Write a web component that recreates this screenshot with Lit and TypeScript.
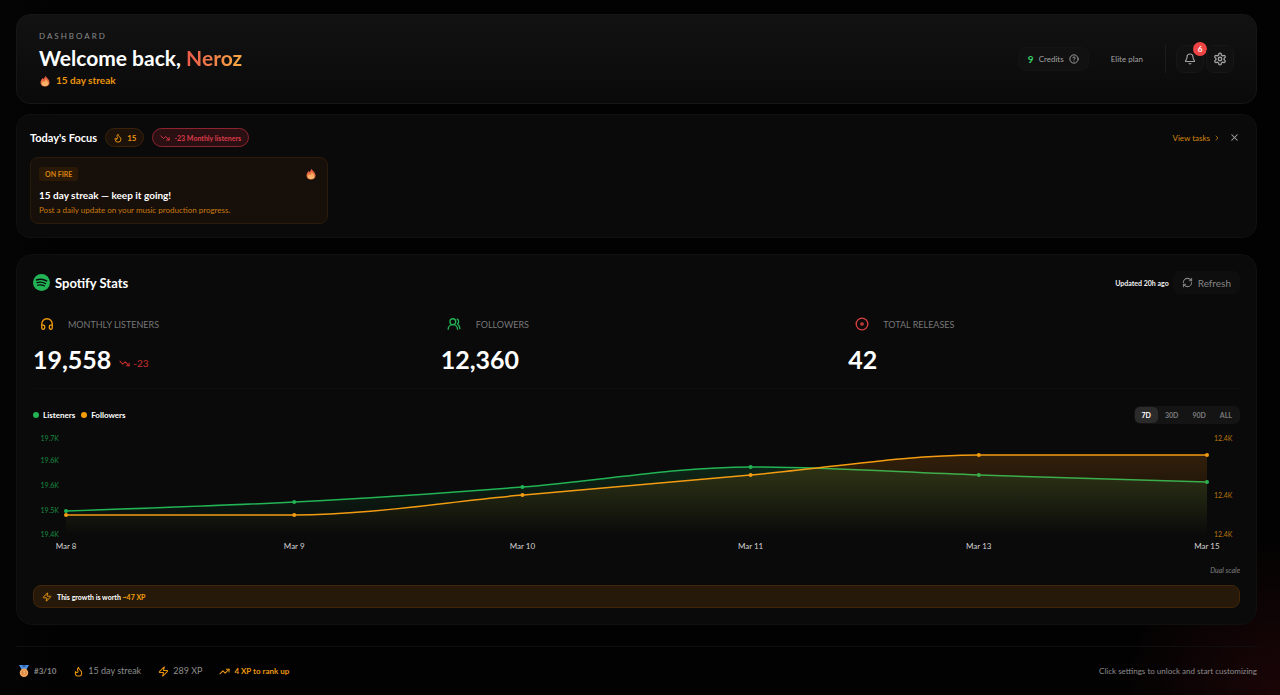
import { LitElement, html, svg, css } from "lit";
import { customElement, property, state } from "lit/decorators.js";
import { classMap } from "lit/directives/class-map.js";

const ICONS: Record<string, unknown> = {
  flame: svg`<path d="M8.5 14.5A2.5 2.5 0 0 0 11 12c0-1.38-.5-2-1-3-1.072-2.143-.224-4.054 2-6 .5 2.5 2 4.9 4 6.5 2 1.6 3 3.5 3 5.5a7 7 0 1 1-14 0c0-1.153.433-2.294 1-3a2.5 2.5 0 0 0 2.5 2.5z"/>`,
  down: svg`<path d="M16 17h6v-6"/><path d="m22 17-8.5-8.5-5 5L2 7"/>`,
  up: svg`<path d="M16 7h6v6"/><path d="m22 7-8.5 8.5-5-5L2 17"/>`,
  help: svg`<circle cx="12" cy="12" r="10"/><path d="M9.09 9a3 3 0 0 1 5.83 1c0 2-3 3-3 3"/><path d="M12 17h.01"/>`,
  bell: svg`<path d="M10.268 21a2 2 0 0 0 3.464 0"/><path d="M3.262 15.326A1 1 0 0 0 4 17h16a1 1 0 0 0 .74-1.673C19.41 13.956 18 12.499 18 8A6 6 0 0 0 6 8c0 4.499-1.411 5.956-2.738 7.326"/>`,
  gear: svg`<path d="M12.22 2h-.44a2 2 0 0 0-2 2v.18a2 2 0 0 1-1 1.73l-.43.25a2 2 0 0 1-2 0l-.15-.08a2 2 0 0 0-2.73.73l-.22.38a2 2 0 0 0 .73 2.73l.15.1a2 2 0 0 1 1 1.72v.51a2 2 0 0 1-1 1.74l-.15.09a2 2 0 0 0-.73 2.73l.22.38a2 2 0 0 0 2.73.73l.15-.08a2 2 0 0 1 2 0l.43.25a2 2 0 0 1 1 1.73V20a2 2 0 0 0 2 2h.44a2 2 0 0 0 2-2v-.18a2 2 0 0 1 1-1.73l.43-.25a2 2 0 0 1 2 0l.15.08a2 2 0 0 0 2.73-.73l.22-.39a2 2 0 0 0-.73-2.73l-.15-.08a2 2 0 0 1-1-1.74v-.5a2 2 0 0 1 1-1.74l.15-.09a2 2 0 0 0 .73-2.73l-.22-.38a2 2 0 0 0-2.73-.73l-.15.08a2 2 0 0 1-2 0l-.43-.25a2 2 0 0 1-1-1.73V4a2 2 0 0 0-2-2z"/><circle cx="12" cy="12" r="3"/>`,
  chevron: svg`<path d="m9 18 6-6-6-6"/>`,
  close: svg`<path d="M18 6 6 18"/><path d="m6 6 12 12"/>`,
  headphones: svg`<path d="M3 14h3a2 2 0 0 1 2 2v3a2 2 0 0 1-2 2H5a2 2 0 0 1-2-2v-7a9 9 0 0 1 18 0v7a2 2 0 0 1-2 2h-1a2 2 0 0 1-2-2v-3a2 2 0 0 1 2-2h3"/>`,
  users: svg`<path d="M18 21a8 8 0 0 0-16 0"/><circle cx="10" cy="8" r="5"/><path d="M22 20c0-3.37-2-6.5-4-8a5 5 0 0 0-.45-8.3"/>`,
  disc: svg`<circle cx="12" cy="12" r="10"/><circle cx="12" cy="12" r="2"/>`,
  refresh: svg`<path d="M3 12a9 9 0 0 1 9-9 9.75 9.75 0 0 1 6.74 2.74L21 8"/><path d="M21 3v5h-5"/><path d="M21 12a9 9 0 0 1-9 9 9.75 9.75 0 0 1-6.74-2.74L3 16"/><path d="M8 16H3v5"/>`,
  zap: svg`<path d="M4 14a1 1 0 0 1-.78-1.63l9.9-10.2a.5.5 0 0 1 .86.46l-1.92 6.02A1 1 0 0 0 13 10h7a1 1 0 0 1 .78 1.63l-9.9 10.2a.5.5 0 0 1-.86-.46l1.92-6.02A1 1 0 0 0 11 14z"/>`,
};

@customElement("ui-icon")
export class UiIcon extends LitElement {
  @property() name = "";
  static styles = css`
    :host { display: inline-flex; width: 12px; height: 12px; flex: none; }
    .glyph {
      width: 100%; height: 100%; fill: none; stroke: currentColor;
      stroke-width: 2.25; stroke-linecap: round; stroke-linejoin: round;
    }
  `;
  render() {
    return html`<svg class="glyph" viewBox="0 0 24 24" aria-hidden="true">${ICONS[this.name]}</svg>`;
  }
}

@customElement("fire-emoji")
export class FireEmoji extends LitElement {
  static styles = css`
    :host { display: inline-flex; width: 12px; height: 12px; flex: none; }
    .art { width: 100%; height: 100%; }
  `;
  render() {
    return html`<svg class="art" viewBox="0 0 24 24" aria-hidden="true">
      <defs>
        <linearGradient id="f" x1="0" y1="0" x2="0" y2="1">
          <stop offset="0" stop-color="#d9503c"/><stop offset="1" stop-color="#f58a4a"/>
        </linearGradient>
        <linearGradient id="i" x1="0" y1="0" x2="0" y2="1">
          <stop offset="0" stop-color="#f79a4c"/><stop offset="1" stop-color="#fcbd78"/>
        </linearGradient>
      </defs>
      <path fill="url(#f)" d="M12.500 1.500c1.500 3 8.500 6.500 8.500 13.500 0 5-4 8-9 8s-9-3-9-8c0-4 2.500-6.500 4-9 .8.6 1.300 1.300 1.600 2C10 6.500 12 4.500 12.500 1.500z"/>
      <path fill="url(#i)" d="M13.500 7.500c.8 3 5 4.500 5 9 0 3.500-3 5.500-6.500 5.500s-6.300-2-6.300-5c0-2 1-3.500 2-5 .9.5 1.400 1.200 1.700 2 2-1.300 3.800-3.500 4.100-6.500z"/>
    </svg>`;
  }
}

interface Pt { x: number; y: number; }

/* Monotone cubic interpolation through evenly read samples. */
function monotone(p: Pt[]): string {
  const n = p.length;
  const s = p.slice(1).map((q, i) => (q.y - p[i].y) / (q.x - p[i].x));
  const t = p.map((_, i) => {
    if (i === 0 || i === n - 1) return 0;
    const a = s[i - 1];
    const b = s[i];
    return a * b <= 0 ? 0 : Math.sign(a) * Math.min(Math.abs(a), Math.abs(b), Math.abs(a + b) / 4) * 2;
  });
  t[0] = (3 * s[0] - t[1]) / 2;
  t[n - 1] = (3 * s[n - 2] - t[n - 2]) / 2;
  let d = `M${p[0].x},${p[0].y}`;
  for (let i = 0; i < n - 1; i++) {
    const h = (p[i + 1].x - p[i].x) / 3;
    d += `C${p[i].x + h},${p[i].y + t[i] * h} ${p[i + 1].x - h},${p[i + 1].y - t[i + 1] * h} ${p[i + 1].x},${p[i + 1].y}`;
  }
  return d;
}

@customElement("growth-chart")
export class GrowthChart extends LitElement {
  private days = ["Mar 8", "Mar 9", "Mar 10", "Mar 11", "Mar 13", "Mar 15"];
  private listeners = [24, 33, 48, 68, 60, 53];
  private followers = [20, 20, 40, 60, 80, 80];

  static styles = css`
    :host { display: grid; grid-template-columns: 26px 1fr 26px; column-gap: 7px; }
    .axis { display: grid; font-size: 7px; line-height: 12px; }
    .left { grid-template-rows: 22px 25px 25px 24px 12px; color: #178a42; text-align: right; }
    .right { grid-template-rows: 57px 39px 12px; color: #b8740c; }
    .plot { padding-top: 3px; min-width: 0; }
    .canvas { display: block; width: 100%; height: 100px; overflow: visible; }
    .line { fill: none; stroke-width: 1.5; vector-effect: non-scaling-stroke; }
    .dot { stroke-width: 4; stroke-linecap: round; vector-effect: non-scaling-stroke; }
    .green { stroke: #22b455; }
    .amber { stroke: #f39c12; }
    .days { display: flex; justify-content: space-between; margin: 5px -20px 0; font-size: 8px; line-height: 12px; color: #d4d4d4; }
    .day { width: 40px; text-align: center; }
  `;

  private series(values: number[], color: string, fill: string) {
    const pts = values.map((v, i) => ({ x: i * 200, y: 100 - v }));
    const d = monotone(pts);
    return svg`
      <path d="${d}L1000,100L0,100Z" fill=${fill}></path>
      <path class="line ${color}" d=${d}></path>
      ${pts.map((p) => svg`<path class="dot ${color}" d="M${p.x},${p.y}h0.01"></path>`)}`;
  }

  render() {
    return html`
      <div class="axis left">${["19.7K", "19.6K", "19.6K", "19.5K", "19.4K"].map((l) => html`<span>${l}</span>`)}</div>
      <div class="plot">
        <svg class="canvas" viewBox="0 0 1000 100" preserveAspectRatio="none" role="img" aria-label="Listeners and followers">
          <defs>
            <linearGradient id="g" x1="0" y1="0" x2="0" y2="1">
              <stop offset="0" stop-color="#22c55e" stop-opacity="0.15"/><stop offset="1" stop-color="#22c55e" stop-opacity="0"/>
            </linearGradient>
            <linearGradient id="a" x1="0" y1="0" x2="0" y2="1">
              <stop offset="0" stop-color="#f5870b" stop-opacity="0.17"/><stop offset="1" stop-color="#f5870b" stop-opacity="0"/>
            </linearGradient>
          </defs>
          ${this.series(this.listeners, "green", "url(#g)")}
          ${this.series(this.followers, "amber", "url(#a)")}
        </svg>
        <div class="days">${this.days.map((d) => html`<span class="day">${d}</span>`)}</div>
      </div>
      <div class="axis right">${["12.4K", "12.4K", "12.4K"].map((l) => html`<span>${l}</span>`)}</div>
    `;
  }
}

@customElement("app-root")
export class AppRoot extends LitElement {
  @state() private range = "7D";

  static styles = css`
    :host {
      display: block; box-sizing: border-box; min-height: 100vh; padding: 14px 23px 0 16px;
      font-family: Lato, "Open Sans", sans-serif; color: #fff;
      background:
        radial-gradient(circle at 100% 100%, rgba(150, 20, 30, 0.17), transparent 160px),
        linear-gradient(90deg, #050404, #020202 60px);
    }
    *, *::before { box-sizing: border-box; }
    h1, h2, h3, p { margin: 0; }
    button { font: inherit; color: inherit; background: none; border: 0; padding: 0; cursor: pointer; }
    a { text-decoration: none; }
    .card { border: 1px solid #101010; border-radius: 14px; background: #0a0a0a; }
    .row { display: flex; align-items: center; }
    .between { justify-content: space-between; }

    .hero { padding: 15px 22px; border-color: #161616; background: linear-gradient(180deg, #121212, #0a0a0a); }
    .eyebrow { font-size: 8px; line-height: 13px; letter-spacing: 2px; color: #8a8a8a; }
    .title { font-size: 21px; line-height: 30px; font-weight: 700; }
    .name { background: linear-gradient(90deg, #ea5a4c, #f7a944); -webkit-background-clip: text; background-clip: text; color: transparent; }
    .streak { gap: 5px; font-size: 10px; line-height: 15px; font-weight: 700; color: #eb960f; }
    .tools { gap: 5px; }
    .credits { gap: 5px; height: 24px; padding: 0 9px; border: 1px solid #141414; border-radius: 8px; background: #111; font-size: 8px; color: #a3a3a3; }
    .count { font-size: 10px; font-weight: 700; color: #34d067; }
    .credits ui-icon { width: 10px; height: 10px; }
    .plan { padding: 0 17px; font-size: 8px; color: #a3a3a3; }
    .rule { width: 1px; height: 28px; background: #1c1c1c; margin-right: 5px; }
    .square { position: relative; display: flex; align-items: center; justify-content: center; width: 28px; height: 28px; border: 1px solid #171717; border-radius: 8px; background: #111; color: #a3a3a3; }
    .square + .square { margin-left: -3px; }
    .gear { width: 14px; height: 14px; }
    .badge { position: absolute; top: -4px; right: -4px; width: 14px; height: 14px; border-radius: 7px; background: #ef4444; color: #fff; font-size: 8px; line-height: 14px; font-weight: 700; }

    .focus { margin-top: 10px; padding: 13px; }
    .heading { font-size: 11px; line-height: 19px; font-weight: 700; }
    .pills { gap: 8px; }
    .pill { display: flex; align-items: center; gap: 4px; height: 19px; padding: 0 7px; border: 1px solid #3a220b; border-radius: 10px; background: #1c1209; color: #eb960f; font-size: 8px; font-weight: 700; }
    .pill ui-icon { width: 10px; height: 10px; }
    .loss { border-color: #8c2430; background: #2b1013; color: #d93a48; font-size: 7px; }
    .actions { gap: 8px; color: #a3a3a3; }
    .tasks { display: flex; align-items: center; gap: 3px; font-size: 8px; color: #d4860c; }
    .tasks ui-icon { width: 8px; height: 8px; }
    .close { display: flex; margin-right: 3px; }
    .close ui-icon { width: 11px; height: 11px; }
    .tips { display: grid; grid-template-columns: repeat(4, 1fr); gap: 7px; margin-top: 10px; }
    .tip { padding: 9px 8px 6px; border: 1px solid #2c1b0a; border-radius: 8px; background: #170f09; }
    .tag { padding: 0 6px; border-radius: 3px; background: #2a1906; font-size: 7px; line-height: 14px; font-weight: 700; color: #d9820c; }
    .tip-title { margin-top: 6px; font-size: 10px; line-height: 16px; font-weight: 700; }
    .tip-text { font-size: 8px; line-height: 14px; color: #c97a0e; }
    .tip-head { height: 14px; padding-right: 2px; }

    .stats { margin-top: 16px; padding: 16px; border-radius: 16px; }
    .brand { gap: 5px; font-size: 13px; line-height: 22px; }
    .logo { width: 17px; height: 17px; flex: none; }
    .updated { font-size: 7px; font-weight: 700; color: #f0f0f0; }
    .refresh-row { gap: 4px; }
    .refresh { display: flex; align-items: center; gap: 5px; height: 23px; padding: 0 8px; border: 1px solid #0f0f0f; border-radius: 7px; background: #0e0e0e; color: #858585; font-size: 10px; }
    .refresh ui-icon { width: 11px; height: 11px; }
    .metrics { display: grid; grid-template-columns: repeat(3, 1fr); gap: 16px; margin-top: 16px; padding-bottom: 13px; border-bottom: 1px solid #0e0e0e; }
    .metric-head { gap: 8px; height: 28px; font-size: 9px; color: #777; }
    .metric-icon { display: flex; align-items: center; justify-content: center; width: 27px; height: 28px; }
    .metric-icon ui-icon { width: 14px; height: 14px; }
    .amber { color: #f59e0b; }
    .green { color: #22b455; }
    .red { color: #dc4040; }
    .value { display: flex; align-items: center; gap: 8px; margin-top: 5px; font-size: 25px; line-height: 32px; font-weight: 700; }
    .delta { display: flex; align-items: center; gap: 3px; padding-top: 8px; font-size: 10px; line-height: 12px; font-weight: 400; color: #cc2d2d; }
    .delta ui-icon { width: 11px; height: 11px; }

    .legend-row { margin-top: 17px; }
    .legend { gap: 6px; font-size: 8px; font-weight: 700; }
    .key { display: flex; align-items: center; gap: 4px; }
    .bullet { width: 6px; height: 6px; border-radius: 3px; background: currentColor; }
    .ranges { display: flex; height: 18px; padding: 1px; border-radius: 6px; background: #141414; }
    .range { padding: 0 7px; border-radius: 5px; font-size: 7px; font-weight: 700; color: #7c7c7c; }
    .on { background: #2b2b2b; color: #fff; }
    growth-chart { margin-top: 8px; }
    .note { margin-top: 12px; font-size: 7px; line-height: 12px; font-style: italic; color: #808080; text-align: right; }
    .xp { gap: 5px; height: 23px; margin-top: 9px; padding: 0 8px; border: 1px solid #42250a; border-radius: 8px; background: #261909; font-size: 7px; font-weight: 700; }
    .xp ui-icon { width: 10px; height: 10px; color: #f59e0b; }

    .foot { margin-top: 21px; padding: 15px 0; border-top: 1px solid #0f0f0f; font-size: 9px; line-height: 18px; color: #8c8c8c; }
    .facts { gap: 17px; padding-left: 2px; }
    .fact { display: flex; align-items: center; gap: 4px; }
    .fact ui-icon { width: 11px; height: 11px; color: #eb960f; }
    .rank { font-size: 8px; font-weight: 700; color: #858585; }
    .medal { width: 12px; height: 12px; }
    .next { font-size: 8px; font-weight: 700; color: #eb960f; }
    .hint { font-size: 8px; }
  `;

  private metric(icon: string, tone: string, label: string, value: string, delta = "") {
    return html`<div>
      <div class="row metric-head"><span class="metric-icon ${tone}"><ui-icon name=${icon}></ui-icon></span><span>${label}</span></div>
      <div class="value"><span>${value}</span>${delta ? html`<span class="delta"><ui-icon name="down"></ui-icon>${delta}</span>` : ""}</div>
    </div>`;
  }

  render() {
    return html`
      <header class="card hero row between">
        <div>
          <p class="eyebrow">DASHBOARD</p>
          <h1 class="title">Welcome back, <span class="name">Neroz</span></h1>
          <p class="row streak"><fire-emoji></fire-emoji>15 day streak</p>
        </div>
        <div class="row tools">
          <button class="row credits"><span class="count">9</span><span>Credits</span><ui-icon name="help"></ui-icon></button>
          <span class="plan">Elite plan</span>
          <span class="rule"></span>
          <button class="square" aria-label="Notifications"><ui-icon name="bell"></ui-icon><span class="badge">6</span></button>
          <button class="square" aria-label="Settings"><ui-icon class="gear" name="gear"></ui-icon></button>
        </div>
      </header>

      <section class="card focus">
        <div class="row between">
          <div class="row pills">
            <h2 class="heading">Today's Focus</h2>
            <span class="pill"><ui-icon name="flame"></ui-icon>15</span>
            <span class="pill loss"><ui-icon name="down"></ui-icon>-23 Monthly listeners</span>
          </div>
          <div class="row actions">
            <a class="tasks" href="#tasks">View tasks<ui-icon name="chevron"></ui-icon></a>
            <button class="close" aria-label="Dismiss"><ui-icon name="close"></ui-icon></button>
          </div>
        </div>
        <div class="tips">
          <article class="tip">
            <div class="row between tip-head"><span class="tag">ON FIRE</span><fire-emoji></fire-emoji></div>
            <h3 class="tip-title">15 day streak — keep it going!</h3>
            <p class="tip-text">Post a daily update on your music production progress.</p>
          </article>
        </div>
      </section>

      <section class="card stats">
        <div class="row between">
          <h2 class="row brand">
            <svg class="logo" viewBox="0 0 24 24" aria-hidden="true">
              <circle cx="12" cy="12" r="12" fill="#22b455"/>
              <g fill="none" stroke="#0a0a0a" stroke-linecap="round">
                <path stroke-width="2.200" d="M5 8.300c4.800-1.400 10-1 14.200 1.400"/>
                <path stroke-width="1.900" d="M5.600 12.200c4.200-1.200 8.500-.7 12 1.400"/>
                <path stroke-width="1.600" d="M6.200 15.800c3.500-.9 7-.5 10 1.200"/>
              </g>
            </svg>Spotify Stats
          </h2>
          <div class="row refresh-row">
            <span class="updated">Updated 20h ago</span>
            <button class="refresh"><ui-icon name="refresh"></ui-icon>Refresh</button>
          </div>
        </div>
        <div class="metrics">
          ${this.metric("headphones", "amber", "MONTHLY LISTENERS", "19,558", "-23")}
          ${this.metric("users", "green", "FOLLOWERS", "12,360")}
          ${this.metric("disc", "red", "TOTAL RELEASES", "42")}
        </div>
        <div class="row between legend-row">
          <div class="row legend">
            <span class="key"><span class="bullet green"></span>Listeners</span>
            <span class="key"><span class="bullet amber"></span>Followers</span>
          </div>
          <div class="ranges">
            ${["7D", "30D", "90D", "ALL"].map((r) => html`<button
              class=${classMap({ range: true, on: r === this.range })}
              @click=${() => (this.range = r)}>${r}</button>`)}
          </div>
        </div>
        <growth-chart></growth-chart>
        <p class="note">Dual scale</p>
        <p class="row xp"><ui-icon name="zap"></ui-icon><span>This growth is worth <span class="amber">~47 XP</span></span></p>
      </section>

      <footer class="row between foot">
        <div class="row facts">
          <span class="fact rank">
            <svg class="medal" viewBox="0 0 24 24" aria-hidden="true">
              <path fill="#4a8be0" d="M2 0h7l3 4 3-4h7l-5 9H7z"/>
              <path fill="#2a62b8" d="M9 0h6l-3 4z"/>
              <circle cx="12" cy="15.500" r="8.500" fill="#f2a656"/>
              <circle cx="12" cy="15.500" r="5" fill="#d98445"/>
              <path fill="none" stroke="#fbd096" stroke-width="1.500" d="M10.500 13h3l-1.700 2.200c2.500 0 2.500 3.500-1.300 3"/>
            </svg>#3/10
          </span>
          <span class="fact"><ui-icon name="flame"></ui-icon>15 day streak</span>
          <span class="fact"><ui-icon name="zap"></ui-icon>289 XP</span>
          <span class="fact next"><ui-icon name="up"></ui-icon>4 XP to rank up</span>
        </div>
        <span class="hint">Click settings to unlock and start customizing</span>
      </footer>
    `;
  }
}
